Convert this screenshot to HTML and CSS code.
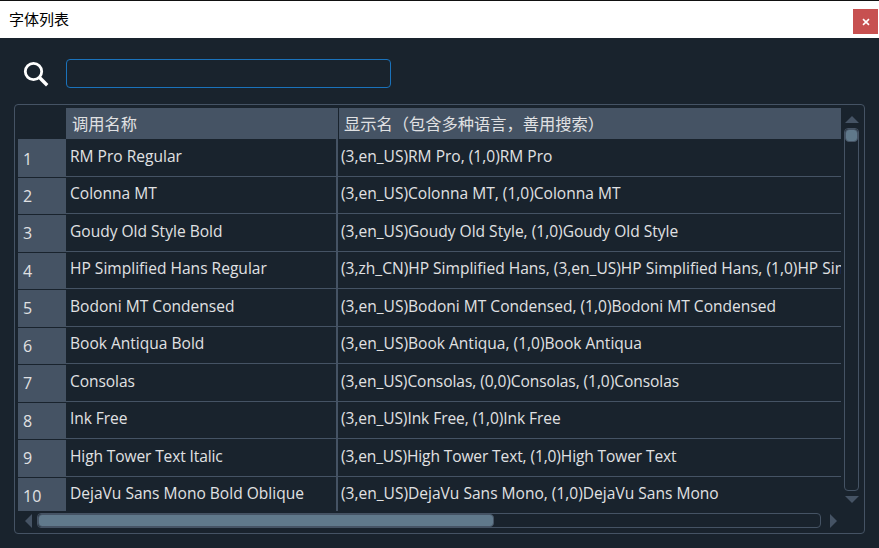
FILE: index.html
```html
<!DOCTYPE html>
<html lang="zh-CN">
<head>
<meta charset="utf-8">
<title>字体列表</title>
<link rel="stylesheet" href="styles.css">
</head>
<body>
<div class="window">
  <header class="titlebar">
    <span class="title">字体列表</span>
    <button class="close" aria-label="关闭"><svg width="8" height="8" viewBox="0 0 8 8"><path d="M1 1.2L7 6.8M7 1.2L1 6.8" stroke="#fff" stroke-width="1.6"/></svg></button>
  </header>
  <div class="search">
    <svg class="lens" width="26" height="26" viewBox="0 0 26 26"><circle cx="10.5" cy="10.5" r="8.2" fill="none" stroke="#fff" stroke-width="2.8"/><path d="M16 16L24.2 24.2" stroke="#fff" stroke-width="3.4"/></svg>
    <input class="field" type="text">
  </div>
  <main class="frame">
    <div class="view">
      <div class="table">
        <div class="head"><span class="corner"></span><span class="h1">调用名称</span><span class="h2">显示名（包含多种语言，善用搜索）</span></div>
        <div class="row"><span class="num">1</span><span class="name">RM Pro Regular</span><span class="desc">(3,en_US)RM Pro, (1,0)RM Pro</span></div>
        <div class="row"><span class="num">2</span><span class="name">Colonna MT</span><span class="desc">(3,en_US)Colonna MT, (1,0)Colonna MT</span></div>
        <div class="row"><span class="num">3</span><span class="name">Goudy Old Style Bold</span><span class="desc">(3,en_US)Goudy Old Style, (1,0)Goudy Old Style</span></div>
        <div class="row"><span class="num">4</span><span class="name">HP Simplified Hans Regular</span><span class="desc">(3,zh_CN)HP Simplified Hans, (3,en_US)HP Simplified Hans, (1,0)HP Simplified Hans</span></div>
        <div class="row"><span class="num">5</span><span class="name">Bodoni MT Condensed</span><span class="desc">(3,en_US)Bodoni MT Condensed, (1,0)Bodoni MT Condensed</span></div>
        <div class="row"><span class="num">6</span><span class="name">Book Antiqua Bold</span><span class="desc">(3,en_US)Book Antiqua, (1,0)Book Antiqua</span></div>
        <div class="row tight"><span class="num">7</span><span class="name">Consolas</span><span class="desc">(3,en_US)Consolas, (0,0)Consolas, (1,0)Consolas</span></div>
        <div class="row tight"><span class="num">8</span><span class="name">Ink Free</span><span class="desc">(3,en_US)Ink Free, (1,0)Ink Free</span></div>
        <div class="row tighter"><span class="num">9</span><span class="name">High Tower Text Italic</span><span class="desc">(3,en_US)High Tower Text, (1,0)High Tower Text</span></div>
        <div class="row last"><span class="num">10</span><span class="name">DejaVu Sans Mono Bold Oblique</span><span class="desc">(3,en_US)DejaVu Sans Mono, (1,0)DejaVu Sans Mono</span></div>
      </div>
      <div class="vbar">
        <svg width="14" height="7" viewBox="0 0 14 7"><path d="M7 0L14 7H0Z"/></svg>
        <div class="vtrack"><div class="vthumb"></div></div>
        <svg width="14" height="7" viewBox="0 0 14 7"><path d="M0 0H14L7 7Z"/></svg>
      </div>
    </div>
    <div class="hbar">
      <svg width="7" height="14" viewBox="0 0 7 14"><path d="M7 0V14L0 7Z"/></svg>
      <div class="htrack"><div class="hthumb"></div></div>
      <svg width="7" height="14" viewBox="0 0 7 14"><path d="M0 0L7 7L0 14Z"/></svg>
    </div>
  </main>
</div>
</body>
</html>
```
FILE: styles.css
```css
* { box-sizing: border-box; }
body { margin: 0; background: #19232d; font-family: "Open Sans", "Noto Sans CJK SC", sans-serif; color: #e0e1e3; }
.window { width: 879px; height: 548px; overflow: hidden; }
.titlebar { height: 38px; background: #fff; border-top: 1px solid #111; display: flex; justify-content: space-between; padding: 8px 1px 0 9px; }
.title { font: 15px/20px "Noto Sans CJK SC", sans-serif; color: #000; }
.close { width: 25px; height: 25px; border: 0; padding: 0; background: #c75050; display: flex; align-items: center; justify-content: center; }
.search { height: 66px; display: flex; padding: 21px 0 0 23px; }
.lens { margin: 2px 17px 0 0; }
.field { width: 325px; height: 29px; border: 1px solid #1a72bb; border-radius: 4px; background: transparent; color: inherit; outline: 0; }
.frame { margin-left: 14px; width: 851px; height: 430px; border: 1px solid #455364; border-radius: 4px; padding: 3px; }
.view { display: flex; height: 403px; }
.table { width: 823px; flex: none; overflow: hidden; }
.head { display: flex; height: 31px; font: 16.25px/31px "Noto Sans CJK SC", sans-serif; }
.corner { width: 48px; }
.h1 { width: 273px; background: #455364; border-right: 1px solid #19232d; padding-left: 6px; }
.h2 { width: 502px; background: #455364; padding-left: 5px; white-space: nowrap; }
.row { display: flex; height: 38px; white-space: nowrap; font-size: 15.55px; line-height: 35px; }
.row:nth-child(odd) { height: 37px; line-height: 33px; }
.num { width: 48px; background: #455364; padding-left: 5px; font-size: 16px; line-height: 39px; letter-spacing: 0; }
.row + .row .num { border-top: 1px solid #19232d; line-height: 37px; }
.row:nth-child(2) .num { border-top: 0; line-height: 40px; }
.name { width: 272px; border-right: 2px solid #455364; border-bottom: 1px solid #455364; padding-left: 4px; }
.desc { width: 503px; border-bottom: 1px solid #455364; padding-left: 3px; overflow: hidden; }
.tight { letter-spacing: -0.07px; }
.tighter { letter-spacing: -0.12px; }
.row.last { height: 34px; }
.last .name, .last .desc { border-bottom: 0; }
.vbar { width: 20px; flex: none; padding: 8px 0 0 1px; display: flex; flex-direction: column; align-items: center; }
svg path:not([stroke]) { fill: #455364; }
.vtrack { width: 15px; height: 363px; margin: 5px 0; border: 1px solid #455364; border-radius: 4px; }
.vthumb { height: 13px; border: 1px solid #455364; border-radius: 4px; background: #60798b; }
.hbar { display: flex; align-items: center; height: 15px; margin: 2px 0 0 7px; }
.htrack { width: 784px; height: 15px; margin: 0 9px 0 5px; border: 1px solid #455364; border-radius: 4px; }
.hthumb { width: 456px; height: 13px; border: 1px solid #455364; border-radius: 4px; background: #60798b; }
```
